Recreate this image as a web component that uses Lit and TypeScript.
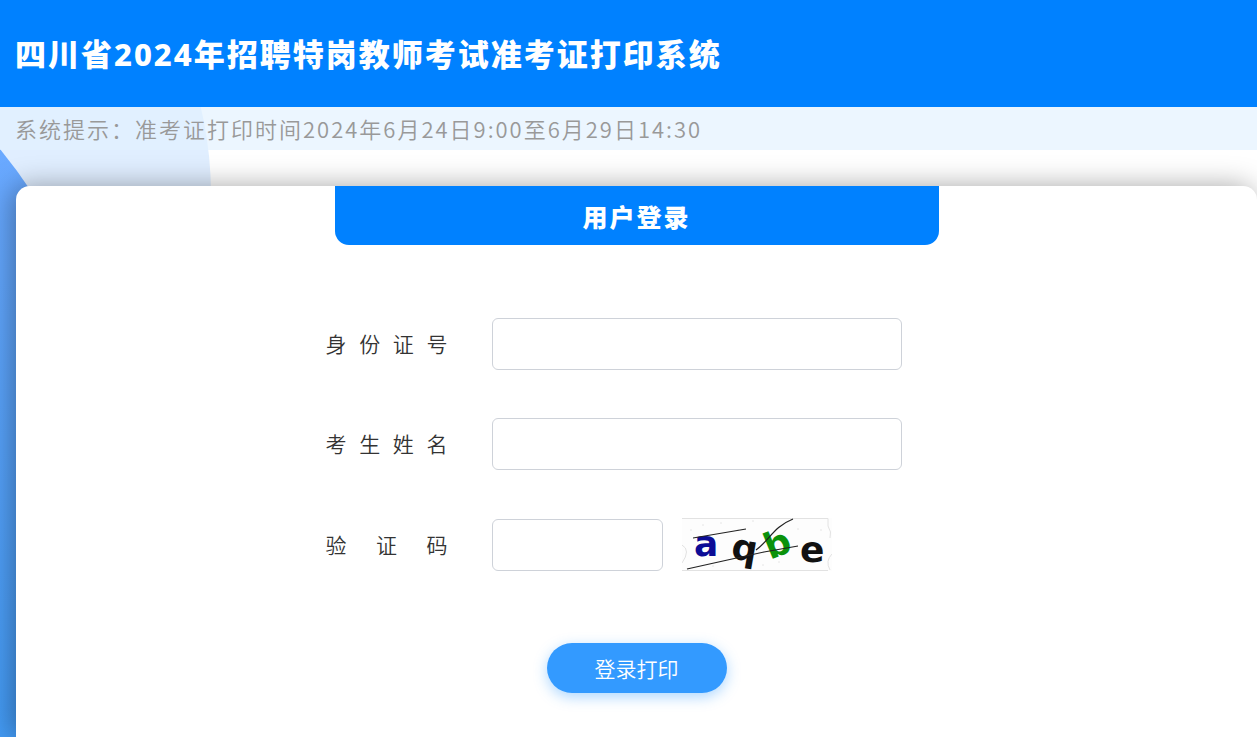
import { LitElement, html, css } from "lit";
import { customElement } from "lit/decorators.js";

@customElement("captcha-image")
class CaptchaImage extends LitElement {
  static styles = css`
    :host {
      display: block;
      width: 150px;
      height: 53px;
    }
    .image {
      display: block;
      width: 100%;
      height: 100%;
    }
    .glyph {
      font: bold 36px "DejaVu Sans", sans-serif;
    }
  `;

  render() {
    return html`
      <svg class="image" viewBox="0 0 150 53" role="img" aria-label="验证码图片">
        <rect width="150" height="53" fill="#fdfdfd" />
        <path d="M0 .5H146V8M0 52.5H146M0 27Q9 32 0 45M146 8Q150 14 148 20M150 36Q143 43 148 52" fill="none" stroke="#e2e2e2" />
        <path d="M20 7h2M38 5h2M55 12h2M70 3h2M96 44h2M115 11h2M128 24h2M30 48h2M80 47h2M8 12h2M138 12h2" stroke="#e6e6e6" />
        <text class="glyph" x="12" y="38" fill="#0c0c96">a</text>
        <text class="glyph" x="0" y="0" fill="#111" transform="translate(48 40) rotate(10)">q</text>
        <text class="glyph" x="0" y="0" fill="#0b920b" transform="translate(88 42) rotate(-22)">b</text>
        <text class="glyph" x="118" y="44" fill="#111">e</text>
        <path d="M11 20L64 11M5 51L50 41L82 34L116 28M74 32C88 22 91 9 111 1" fill="none" stroke="#222" stroke-width="1.2" />
      </svg>
    `;
  }
}

@customElement("app-root")
class AppRoot extends LitElement {
  static styles = css`
    :host {
      display: flex;
      flex-direction: column;
      position: relative;
      z-index: 0;
      min-height: 100vh;
      overflow: hidden;
      background: #fff;
      color: #333;
      font-family: "Noto Sans", "Noto Sans CJK SC", sans-serif;
    }
    *,
    *::before {
      box-sizing: border-box;
    }
    .backdrop {
      position: absolute;
      inset: 0;
      z-index: -1;
      width: 100%;
      height: 100%;
    }
    .header {
      padding: 32px 15px 31px;
      background: #0081ff;
    }
    .title {
      margin: 0;
      color: #fff;
      font-size: 31px;
      font-weight: 800;
      line-height: 44px;
      letter-spacing: 2px;
    }
    .notice {
      margin: 0;
      padding: 5px 15px 6px;
      background: rgba(226, 241, 255, 0.65);
      color: #999;
      font-family: "Noto Sans CJK SC", sans-serif;
      font-size: 22px;
      font-weight: 350;
      line-height: 32px;
      letter-spacing: 2px;
    }
    .card {
      flex: 1;
      display: flex;
      flex-direction: column;
      align-items: center;
      margin: 36px 0 0 16px;
      padding-bottom: 44px;
      border-radius: 14px 14px 0 0;
      background: #fff;
      box-shadow: -4px 0 28px rgba(0, 0, 0, 0.35);
    }
    .heading {
      width: 604px;
      max-width: 100%;
      margin: 0;
      padding: 13px 0 10px;
      border-radius: 0 0 14px 14px;
      background: #0081ff;
      color: #fff;
      font-size: 25px;
      font-weight: 800;
      line-height: 36px;
      letter-spacing: 2px;
      text-align: center;
    }
    .form {
      display: flex;
      flex-direction: column;
      gap: 48px;
      width: 622px;
      max-width: 100%;
      margin-top: 73px;
    }
    .row {
      display: flex;
      align-items: center;
    }
    .label {
      flex: none;
      width: 122px;
      margin-right: 44px;
      font-size: 21px;
      font-weight: 350;
      line-height: 32px;
      text-align: justify;
      text-align-last: justify;
    }
    .input {
      width: 410px;
      height: 52px;
      min-width: 0;
      padding: 0 16px;
      border: 1px solid #ced2d9;
      border-radius: 6px;
      background: #fff;
      color: #333;
      font: inherit;
      font-size: 21px;
      outline: none;
    }
    .input:focus {
      border-color: #339aff;
    }
    .short {
      width: 171px;
      margin-right: 19px;
    }
    .submit {
      align-self: center;
      width: 180px;
      height: 50px;
      margin-top: 24px;
      padding: 0;
      border: 0;
      border-radius: 25px;
      background: #339aff;
      box-shadow: 0 4px 14px rgba(51, 154, 255, 0.4);
      color: #fff;
      font: inherit;
      font-size: 21px;
      font-weight: 350;
      cursor: pointer;
    }
  `;

  render() {
    return html`
      <svg class="backdrop" aria-hidden="true">
        <defs>
          <linearGradient id="wave" gradientUnits="userSpaceOnUse" x1="0" y1="150" x2="0" y2="737">
            <stop offset="0" stop-color="#6aa9ff" />
            <stop offset="1" stop-color="#439bf5" />
          </linearGradient>
        </defs>
        <circle cx="-174" cy="195" r="385" fill="#e0eeff" />
        <circle cx="-466" cy="527" r="600" fill="url(#wave)" />
      </svg>
      <header class="header">
        <h1 class="title">四川省2024年招聘特岗教师考试准考证打印系统</h1>
      </header>
      <p class="notice">系统提示：准考证打印时间2024年6月24日9:00至6月29日14:30</p>
      <main class="card">
        <h2 class="heading">用户登录</h2>
        <form class="form" @submit=${(e: Event) => e.preventDefault()}>
          <div class="row">
            <label class="label" for="idcard">身份证号</label>
            <input class="input" id="idcard" type="text" autocomplete="off" />
          </div>
          <div class="row">
            <label class="label" for="fullname">考生姓名</label>
            <input class="input" id="fullname" type="text" autocomplete="off" />
          </div>
          <div class="row">
            <label class="label" for="code">验证码</label>
            <input class="input short" id="code" type="text" autocomplete="off" />
            <captcha-image></captcha-image>
          </div>
          <button class="submit" type="submit">登录打印</button>
        </form>
      </main>
    `;
  }
}
